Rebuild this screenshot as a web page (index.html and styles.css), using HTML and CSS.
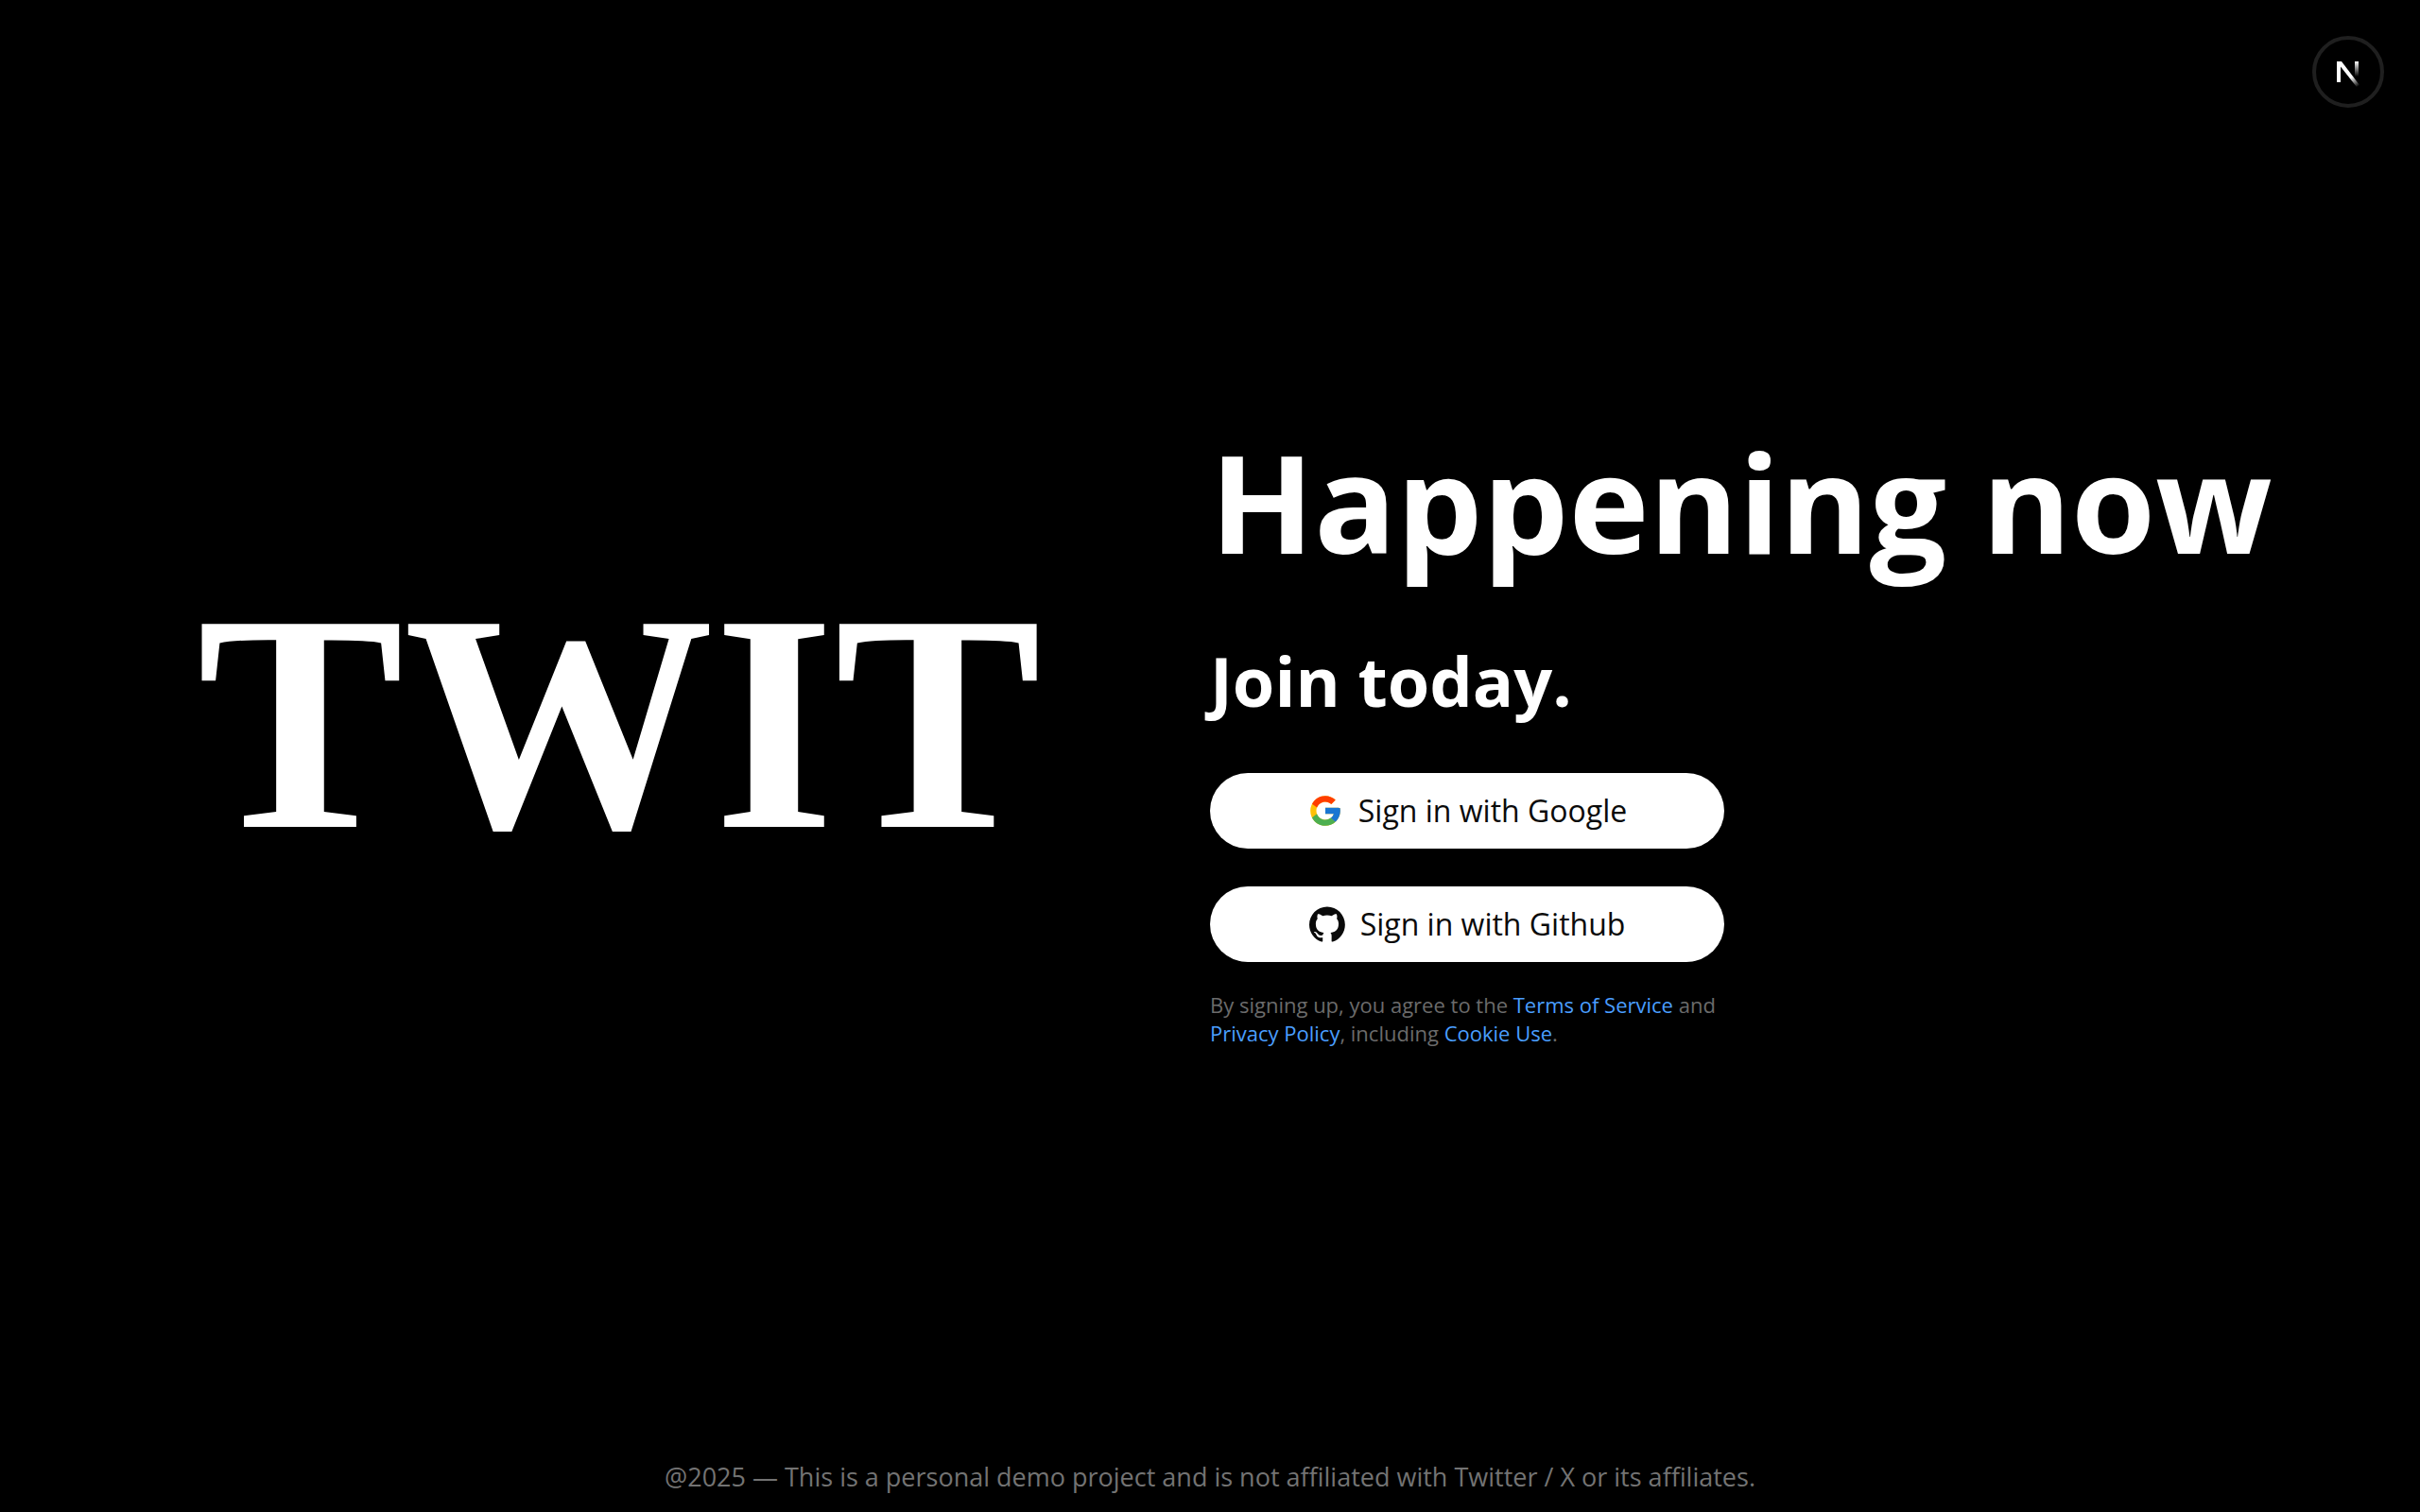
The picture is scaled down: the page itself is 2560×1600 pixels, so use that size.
FILE: index.html
```
<!DOCTYPE html>
<html lang="en">
<head>
<meta charset="utf-8">
<meta name="viewport" content="width=device-width, initial-scale=1">
<title>TWIT</title>
<link rel="stylesheet" href="styles.css">
</head>
<body class="page">
<main class="hero">
  <div class="brand">TWIT</div>
  <section class="join">
    <h1 class="headline">Happening now</h1>
    <h2 class="subhead">Join today.</h2>
    <div class="actions">
      <button class="sign-in" type="button">
        <svg class="provider-icon" viewBox="0 0 48 48" aria-hidden="true">
          <path fill="#FFC107" d="M43.611 20.083H42V20H24v8h11.303c-1.649 4.657-6.08 8-11.303 8-6.627 0-12-5.373-12-12s5.373-12 12-12c3.059 0 5.842 1.154 7.961 3.039l5.657-5.657C34.046 6.053 29.268 4 24 4 12.955 4 4 12.955 4 24s8.955 20 20 20 20-8.955 20-20c0-1.341-.138-2.65-.389-3.917z"/>
          <path fill="#FF3D00" d="M6.306 14.691l6.571 4.819C14.655 15.108 18.961 12 24 12c3.059 0 5.842 1.154 7.961 3.039l5.657-5.657C34.046 6.053 29.268 4 24 4 16.318 4 9.656 8.337 6.306 14.691z"/>
          <path fill="#4CAF50" d="M24 44c5.166 0 9.86-1.977 13.409-5.192l-6.19-5.238A11.91 11.91 0 0 1 24 36c-5.202 0-9.619-3.317-11.283-7.946l-6.522 5.025C9.505 39.556 16.227 44 24 44z"/>
          <path fill="#1976D2" d="M43.611 20.083H42V20H24v8h11.303a12.04 12.04 0 0 1-4.087 5.571l6.193 5.238C36.971 39.205 44 34 44 24c0-1.341-.138-2.65-.389-3.917z"/>
        </svg>
        Sign in with Google
      </button>
      <button class="sign-in" type="button">
        <svg class="provider-icon" viewBox="0 0 98 96" aria-hidden="true">
          <path fill="#0a0a0a" fill-rule="evenodd" d="M48.854 0C21.839 0 0 22 0 49.217c0 21.756 13.993 40.172 33.405 46.69 2.427.49 3.316-1.059 3.316-2.362 0-1.141-.08-5.052-.08-9.127-13.59 2.934-16.42-5.867-16.42-5.867-2.184-5.704-5.42-7.17-5.42-7.17-4.448-3.015.324-3.015.324-3.015 4.934.326 7.523 5.052 7.523 5.052 4.367 7.496 11.404 5.378 14.235 4.074.404-3.178 1.699-5.378 3.074-6.6-10.839-1.141-22.243-5.378-22.243-24.283 0-5.378 1.94-9.778 5.014-13.2-.485-1.222-2.184-6.275.486-13.038 0 0 4.125-1.304 13.426 5.052a46.97 46.97 0 0 1 12.214-1.63c4.125 0 8.33.571 12.213 1.63 9.302-6.356 13.427-5.052 13.427-5.052 2.67 6.763.97 11.816.485 13.038 3.155 3.422 5.015 7.822 5.015 13.2 0 18.905-11.404 23.06-22.324 24.283 1.78 1.548 3.316 4.481 3.316 9.126 0 6.6-.08 11.897-.08 13.526 0 1.304.89 2.853 3.316 2.364 19.412-6.52 33.405-24.935 33.405-46.691C97.707 22 75.788 0 48.854 0z"/>
        </svg>
        Sign in with Github
      </button>
    </div>
    <p class="legal">By signing up, you agree to the <a href="#terms">Terms of Service</a> and <a href="#privacy">Privacy Policy</a>, including <a href="#cookies">Cookie Use</a>.</p>
  </section>
</main>
<footer class="footer">@2025 — This is a personal demo project and is not affiliated with Twitter / X or its affiliates.</footer>
<button class="dev-badge" type="button" aria-label="Open Next.js Dev Tools">
  <svg class="next-icon" viewBox="0 -2 28 32" aria-hidden="true">
    <defs>
      <linearGradient id="diagonal" gradientUnits="userSpaceOnUse" x1="17" y1="20" x2="24" y2="30">
        <stop offset="0" stop-color="#fff"/><stop offset="1" stop-color="#fff" stop-opacity="0"/>
      </linearGradient>
      <linearGradient id="stem" gradientUnits="userSpaceOnUse" x1="0" y1="3" x2="0" y2="19">
        <stop offset="0" stop-color="#fff"/><stop offset="1" stop-color="#fff" stop-opacity="0"/>
      </linearGradient>
    </defs>
    <path fill="#fff" d="M2 3h4v22H2z"/>
    <path fill="url(#diagonal)" d="M2 3h5l19 25-3 2L4 6z"/>
    <path fill="url(#stem)" d="M21 3h4v16h-4z"/>
  </svg>
</button>
</body>
</html>
```
FILE: styles.css
```
* {
  box-sizing: border-box;
}

.page {
  display: flex;
  flex-direction: column;
  min-height: 100vh;
  margin: 0;
  background: #000;
  color: #fff;
  font-family: "Open Sans", "Noto Sans", sans-serif;
}

.hero {
  display: grid;
  flex: 1;
  grid-template-columns: 1fr 1fr;
  align-items: center;
}

.brand {
  padding-left: 30px;
  font: bold 328px/1 "Liberation Serif", serif;
  text-align: center;
}

.headline,
.subhead,
.legal {
  margin: 0;
}

.headline {
  font-size: 144px;
  line-height: 216px;
  white-space: nowrap;
}

.subhead {
  margin-top: 42px;
  font-size: 72px;
  line-height: 80px;
}

.actions {
  display: flex;
  flex-direction: column;
  gap: 40px;
  max-width: 544px;
  margin-top: 58px;
}

.sign-in {
  display: flex;
  align-items: center;
  justify-content: center;
  gap: 16px;
  height: 80px;
  padding: 0;
  border: 0;
  border-radius: 40px;
  background: #fff;
  color: #0a0a0a;
  font: 32px/48px "Open Sans", "Noto Sans", sans-serif;
  cursor: pointer;
}

.provider-icon {
  width: 38px;
  height: 38px;
}

.legal {
  max-width: 544px;
  margin-top: 30px;
  color: #6b6b6b;
  font-size: 22px;
  line-height: 30px;
}

.legal a {
  color: #4a9eff;
  text-decoration: none;
}

.footer {
  height: 70px;
  color: #737373;
  font-size: 27px;
  line-height: 66px;
  text-align: center;
}

.dev-badge {
  position: fixed;
  top: 38px;
  right: 38px;
  display: grid;
  place-items: center;
  width: 76px;
  height: 76px;
  padding: 0;
  border: 4px solid #1f1f1f;
  border-radius: 50%;
  background: #000;
}

.next-icon {
  width: 28px;
  height: 32px;
}
```
